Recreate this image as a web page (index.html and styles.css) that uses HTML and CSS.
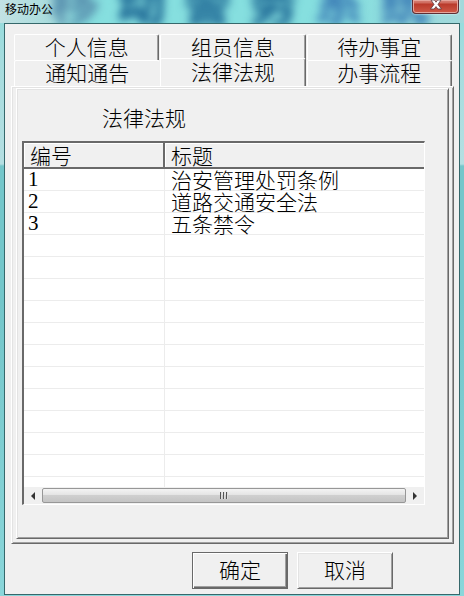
FILE: index.html
```
<!DOCTYPE html>
<html lang="zh">

<head>
    <meta charset="UTF-8">
    <meta name="viewport" content="width=device-width, initial-scale=1.0">
    <title>移动办公</title>
    <link rel="stylesheet" href="styles.css">
</head>

<body>
    <div class="window">
        <header class="title-bar">
            <div class="glass" aria-hidden="true">
                <span>移</span><span>动</span><span>警</span><span>务</span><span>系</span><span>统</span>
            </div>
            <h1>移动办公</h1>
            <button class="close" type="button" aria-label="关闭">
                <svg width="12" height="10" viewBox="0 0 12 10">
                    <path d="M1 0h3.500L6 2.200 7.500 0H11L8 4.500 11.500 9H7.800L6 6.600 4.200 9H.5L4 4.500z" fill="#fff" stroke="#5b3a3f" stroke-width=".8" />
                </svg>
            </button>
        </header>

        <main class="client">
            <nav class="tabs" role="tablist">
                <button class="tab" type="button" role="tab">个人信息</button>
                <button class="tab" type="button" role="tab">组员信息</button>
                <button class="tab" type="button" role="tab">待办事宜</button>
                <button class="tab" type="button" role="tab">通知通告</button>
                <button class="tab active" type="button" role="tab" aria-selected="true">法律法规</button>
                <button class="tab" type="button" role="tab">办事流程</button>
            </nav>

            <div class="panel">
                <section class="page">
                    <h2>法律法规</h2>
                    <div class="list">
                        <table>
                            <thead>
                                <tr><th class="col-id">编号</th><th>标题</th></tr>
                            </thead>
                            <tbody>
                                <tr><td>1</td><td>治安管理处罚条例</td></tr>
                                <tr><td>2</td><td>道路交通安全法</td></tr>
                                <tr><td>3</td><td>五条禁令</td></tr>
                                <tr><td></td><td></td></tr>
                                <tr><td></td><td></td></tr>
                                <tr><td></td><td></td></tr>
                                <tr><td></td><td></td></tr>
                                <tr><td></td><td></td></tr>
                                <tr><td></td><td></td></tr>
                                <tr><td></td><td></td></tr>
                                <tr><td></td><td></td></tr>
                                <tr><td></td><td></td></tr>
                                <tr><td></td><td></td></tr>
                                <tr><td></td><td></td></tr>
                                <tr class="rest"><td></td><td></td></tr>
                            </tbody>
                        </table>
                        <div class="scrollbar">
                            <button class="arrow" type="button" aria-label="向左滚动">
                                <svg width="4" height="8" viewBox="0 0 4 8"><path d="M4 0v8L0 4z" fill="#333" /></svg>
                            </button>
                            <div class="thumb"><i></i><i></i><i></i></div>
                            <button class="arrow" type="button" aria-label="向右滚动">
                                <svg width="4" height="8" viewBox="0 0 4 8"><path d="M0 0v8l4-4z" fill="#333" /></svg>
                            </button>
                        </div>
                    </div>
                </section>
            </div>

            <footer class="actions">
                <button class="btn default" type="button">确定</button>
                <button class="btn" type="button">取消</button>
            </footer>
        </main>
    </div>
</body>

</html>
```

FILE: styles.css
```
:root {
    --face: #f0f0f0;
    --dark: #696969;
    --shadow: #a0a0a0;
    --light: #fff;
    --soft: #e3e3e3;
    --line: #ececec;
}

* {
    box-sizing: border-box;
}

body {
    margin: 0;
    font-family: "Noto Sans CJK SC", sans-serif;
    font-weight: 300;
    font-size: 21px;
    color: #000;
}

button {
    font: inherit;
    color: inherit;
    padding: 0;
    border: 0;
    background: var(--face);
}

.window {
    min-height: 100vh;
    display: flex;
    flex-direction: column;
    padding: 0 4px 1px;
    background: linear-gradient(#8fdcdc 0, #a5dcde 60px, #b5dfe2 164px, #74c6ca 166px, #74c6ca 300px, #8ad6da);
}

/* 标题栏 */
.title-bar {
    position: relative;
    height: 23px;
    margin: 0 -4px;
    padding: 0 5px;
    display: flex;
    justify-content: space-between;
    align-items: flex-start;
    overflow: hidden;
    background: linear-gradient(90deg, #c2e2e3 0, #a9dcdd 50px, #86dfdf 80px, #86dfdf 75%, #a3d8db);
}

.glass {
    position: absolute;
    inset: -26px 0 0 50px;
    display: flex;
    gap: 16px;
    font-size: 50px;
    font-weight: 900;
    line-height: 50px;
    color: #1f6a96;
    filter: blur(4px);
}

.glass span:first-child {
    color: #5b93b0;
}

.glass span:nth-child(n + 5) {
    color: #3f82b8;
}

.title-bar h1 {
    position: relative;
    margin: 0;
    font-size: 12px;
    font-weight: 400;
    line-height: 18px;
}

.close {
    position: relative;
    width: 47px;
    height: 14px;
    display: flex;
    justify-content: center;
    border: 1px solid #5f2f35;
    border-top: 0;
    border-radius: 0 0 4px 4px;
    background: linear-gradient(#d5847a 0, #cf6a5d 3px, #b93a2b 4px, #cf5a48);
    box-shadow: inset 0 0 0 1px #e5a59c, 0 0 2px #fff;
}

.client {
    flex: 1;
    display: flex;
    flex-direction: column;
    padding: 10px 5px 5px 6px;
    border: 1px solid #35686b;
    background: var(--face);
}

/* 选项卡 */
.tabs {
    display: grid;
    grid-template-columns: repeat(3, 1fr);
    grid-auto-rows: 26px;
    column-gap: 1px;
    padding: 0 2px 0 3px;
}

.tab {
    padding-bottom: 4px;
    line-height: 20px;
    border: 1px solid var(--light);
    border-right-color: var(--dark);
    border-bottom: 0;
    border-radius: 2px 2px 0 0;
    box-shadow: inset -1px 0 var(--shadow);
}

.tab:nth-child(4) {
    border-right: 0;
    box-shadow: none;
}

.tab.active {
    margin-top: -2px;
}

.panel,
.page,
.btn {
    border: 1px solid;
    border-color: var(--light) var(--dark) var(--dark) var(--light);
    box-shadow: inset 1px 1px var(--soft), inset -1px -1px var(--shadow);
}

.panel {
    flex: 1;
    display: flex;
    padding: 1px 4px 4px;
}

.page {
    flex: 1;
    padding: 13px 23px 32px 5px;
}

.page h2 {
    margin: 0 0 9px 80px;
    font-size: 21px;
    font-weight: 300;
    line-height: 30px;
}

/* 列表 */
.list {
    border: 2px solid;
    border-color: var(--dark) var(--light) var(--light) var(--dark);
    border-width: 2px 1px 1px 2px;
    background: #fff;
}

table {
    width: 100%;
    table-layout: fixed;
    border-collapse: separate;
    border-spacing: 0;
}

th,
td {
    padding: 0 6px;
    text-align: left;
    font-weight: 300;
    white-space: nowrap;
}

th {
    height: 26px;
    line-height: 24px;
    background: var(--face);
    border-bottom: 2px solid var(--dark);
    box-shadow: inset 1px 1px var(--light);
}

th.col-id {
    width: 141px;
    border-right: 2px solid var(--dark);
}

td {
    height: 22px;
    line-height: 21px;
    border-bottom: 1px solid var(--line);
}

td:first-child {
    padding-left: 4px;
    border-right: 1px solid var(--line);
    font-family: "Liberation Serif", serif;
}

.rest td {
    height: 10px;
    border-bottom: 0;
}

.scrollbar {
    display: flex;
    height: 17px;
    padding: 1px 0;
    background: #f0f0f0;
}

.arrow {
    width: 18px;
    display: flex;
    align-items: center;
    justify-content: center;
}

.thumb {
    flex: 1;
    display: flex;
    align-items: center;
    justify-content: center;
    gap: 1px;
    border: 1px solid #979797;
    border-radius: 2px;
    background: linear-gradient(#f4f4f4, #e4e4e4 45%, #cfcfcf 50%, #c4c4c4);
}

.thumb i {
    width: 2px;
    height: 7px;
    background: linear-gradient(90deg, #555 50%, #ddd 50%);
}

/* 按钮 */
.actions {
    display: flex;
    justify-content: flex-end;
    gap: 9px;
    padding: 8px 61px 0 0;
}

.btn {
    width: 96px;
    height: 37px;
    padding-bottom: 4px;
    line-height: 30px;
}

.btn.default {
    border-color: var(--dark);
    box-shadow: inset 1px 1px var(--light), inset -1px -1px var(--dark), inset -2px -2px var(--shadow);
}
```
